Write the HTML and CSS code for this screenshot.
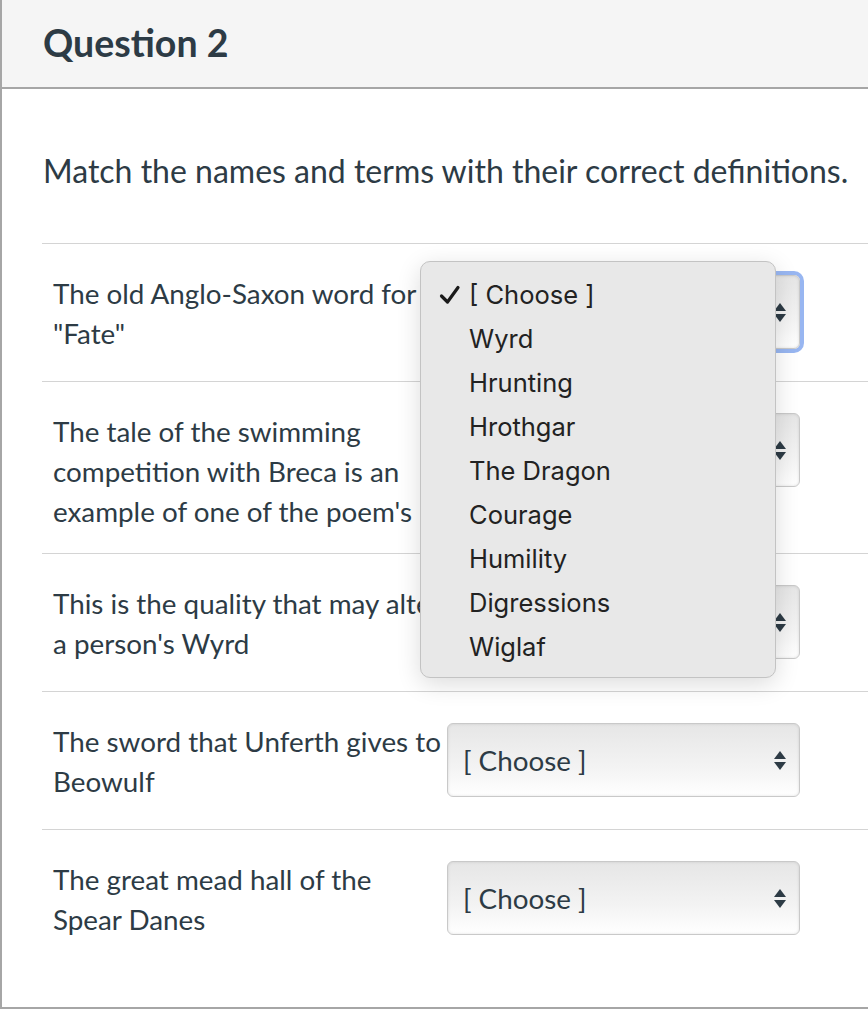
FILE: index.html
```html
<!DOCTYPE html>
<html>
<head>
<meta charset="utf-8">
<link rel="stylesheet" href="styles.css">
</head>
<body>
<div class="quiz">
  <div class="header"><h2 class="title">Question 2</h2></div>
  <div class="content">
    <p class="prompt">Match the names and terms with their correct definitions.</p>
    <div class="answers">
      <div class="row">
        <div class="label">The old Anglo-Saxon word for "Fate"</div>
        <div class="select focused"><span class="value">[ Choose ]</span><span class="arrows"><i class="up"></i><i class="down"></i></span></div>
      </div>
      <div class="row row-tall">
        <div class="label">The tale of the swimming competition with Breca is an example of one of the poem's</div>
        <div class="select"><span class="value">[ Choose ]</span><span class="arrows"><i class="up"></i><i class="down"></i></span></div>
      </div>
      <div class="row">
        <div class="label">This is the quality that may alter a person's Wyrd</div>
        <div class="select"><span class="value">[ Choose ]</span><span class="arrows"><i class="up"></i><i class="down"></i></span></div>
      </div>
      <div class="row">
        <div class="label">The sword that Unferth gives to Beowulf</div>
        <div class="select"><span class="value">[ Choose ]</span><span class="arrows"><i class="up"></i><i class="down"></i></span></div>
      </div>
      <div class="row">
        <div class="label">The great mead hall of the Spear Danes</div>
        <div class="select"><span class="value">[ Choose ]</span><span class="arrows"><i class="up"></i><i class="down"></i></span></div>
      </div>
    </div>
  </div>
  <ul class="menu">
    <li class="opt checked"><svg class="check" width="22" height="20" viewBox="0 0 22 20"><polyline points="2.5,11 8.5,17 19,2.5" fill="none" stroke="#1a1a1a" stroke-width="3.2" stroke-linecap="round" stroke-linejoin="round"/></svg>[ Choose ]</li>
    <li class="opt">Wyrd</li>
    <li class="opt">Hrunting</li>
    <li class="opt">Hrothgar</li>
    <li class="opt">The Dragon</li>
    <li class="opt">Courage</li>
    <li class="opt">Humility</li>
    <li class="opt">Digressions</li>
    <li class="opt">Wiglaf</li>
  </ul>
</div>
</body>
</html>
```
FILE: styles.css
```css
html, body {
  margin: 0;
  padding: 0;
  background: #ffffff;
  overflow: hidden;
}
body {
  font-family: Lato, "Noto Sans", sans-serif;
  color: #2d3b45;
}
.quiz {
  position: relative;
  width: 900px;
  border-left: 2px solid #a6a6a6;
  border-bottom: 2px solid #a6a6a6;
  box-sizing: border-box;
}
.header {
  height: 87px;
  background: #f5f5f5;
  border-bottom: 2px solid #a6a6a6;
  display: flex;
  align-items: center;
  padding-left: 41px;
}
.title {
  margin: 0;
  font-size: 37.5px;
  font-weight: 700;
  color: #2d3b45;
  padding-bottom: 2px;
}
.content {
  padding: 0 0 40px 40px;
}
.prompt {
  margin: 0;
  padding: 61px 0 51px 1px;
  font-size: 32px;
  line-height: 42px;
}
.row {
  display: flex;
  align-items: flex-start;
  border-top: 1px solid #d4d4d4;
  padding: 31px 0 26px 11px;
}
.row-tall {
  padding-bottom: 20px;
}
.label {
  width: 392px;
  font-size: 27.8px;
  line-height: 40px;
  flex-shrink: 0;
  margin-top: -1px;
  margin-bottom: 1px;
}
.select {
  margin-left: 2px;
  width: 353px;
  height: 74px;
  box-sizing: border-box;
  border: 1px solid #c9c9c9;
  border-radius: 6px;
  background: linear-gradient(#e6e6e6, #f3f3f3 60%, #ffffff);
  box-shadow: inset 0 0 3px rgba(0,0,0,0.12);
  display: flex;
  align-items: center;
  justify-content: space-between;
  padding: 0 13px 0 15px;
  font-size: 27.8px;
}
.select.focused {
  box-shadow: 0 0 0 4px #98b6f1, inset 0 0 3px rgba(0,0,0,0.12);
}
.arrows {
  display: flex;
  flex-direction: column;
  gap: 3px;
}
.arrows i {
  display: block;
  width: 0;
  height: 0;
  border-left: 6.5px solid transparent;
  border-right: 6.5px solid transparent;
}
.arrows .up {
  border-bottom: 8px solid #2d3b45;
}
.arrows .down {
  border-top: 8px solid #2d3b45;
}
.menu {
  position: absolute;
  left: 418px;
  top: 261px;
  width: 356px;
  height: 417px;
  box-sizing: border-box;
  margin: 0;
  padding: 11px 0 0 0;
  list-style: none;
  background: #e8e8e8;
  border: 1px solid #c3c3c3;
  border-radius: 10px;
  box-shadow: 0 6px 24px rgba(0,0,0,0.14);
  font-family: Inter, "Noto Sans", sans-serif;
  color: #222222;
}
.opt {
  position: relative;
  height: 44px;
  line-height: 44px;
  font-size: 25.5px;
  padding-left: 48px;
}
.check {
  position: absolute;
  left: 18px;
  top: 12px;
}
```
